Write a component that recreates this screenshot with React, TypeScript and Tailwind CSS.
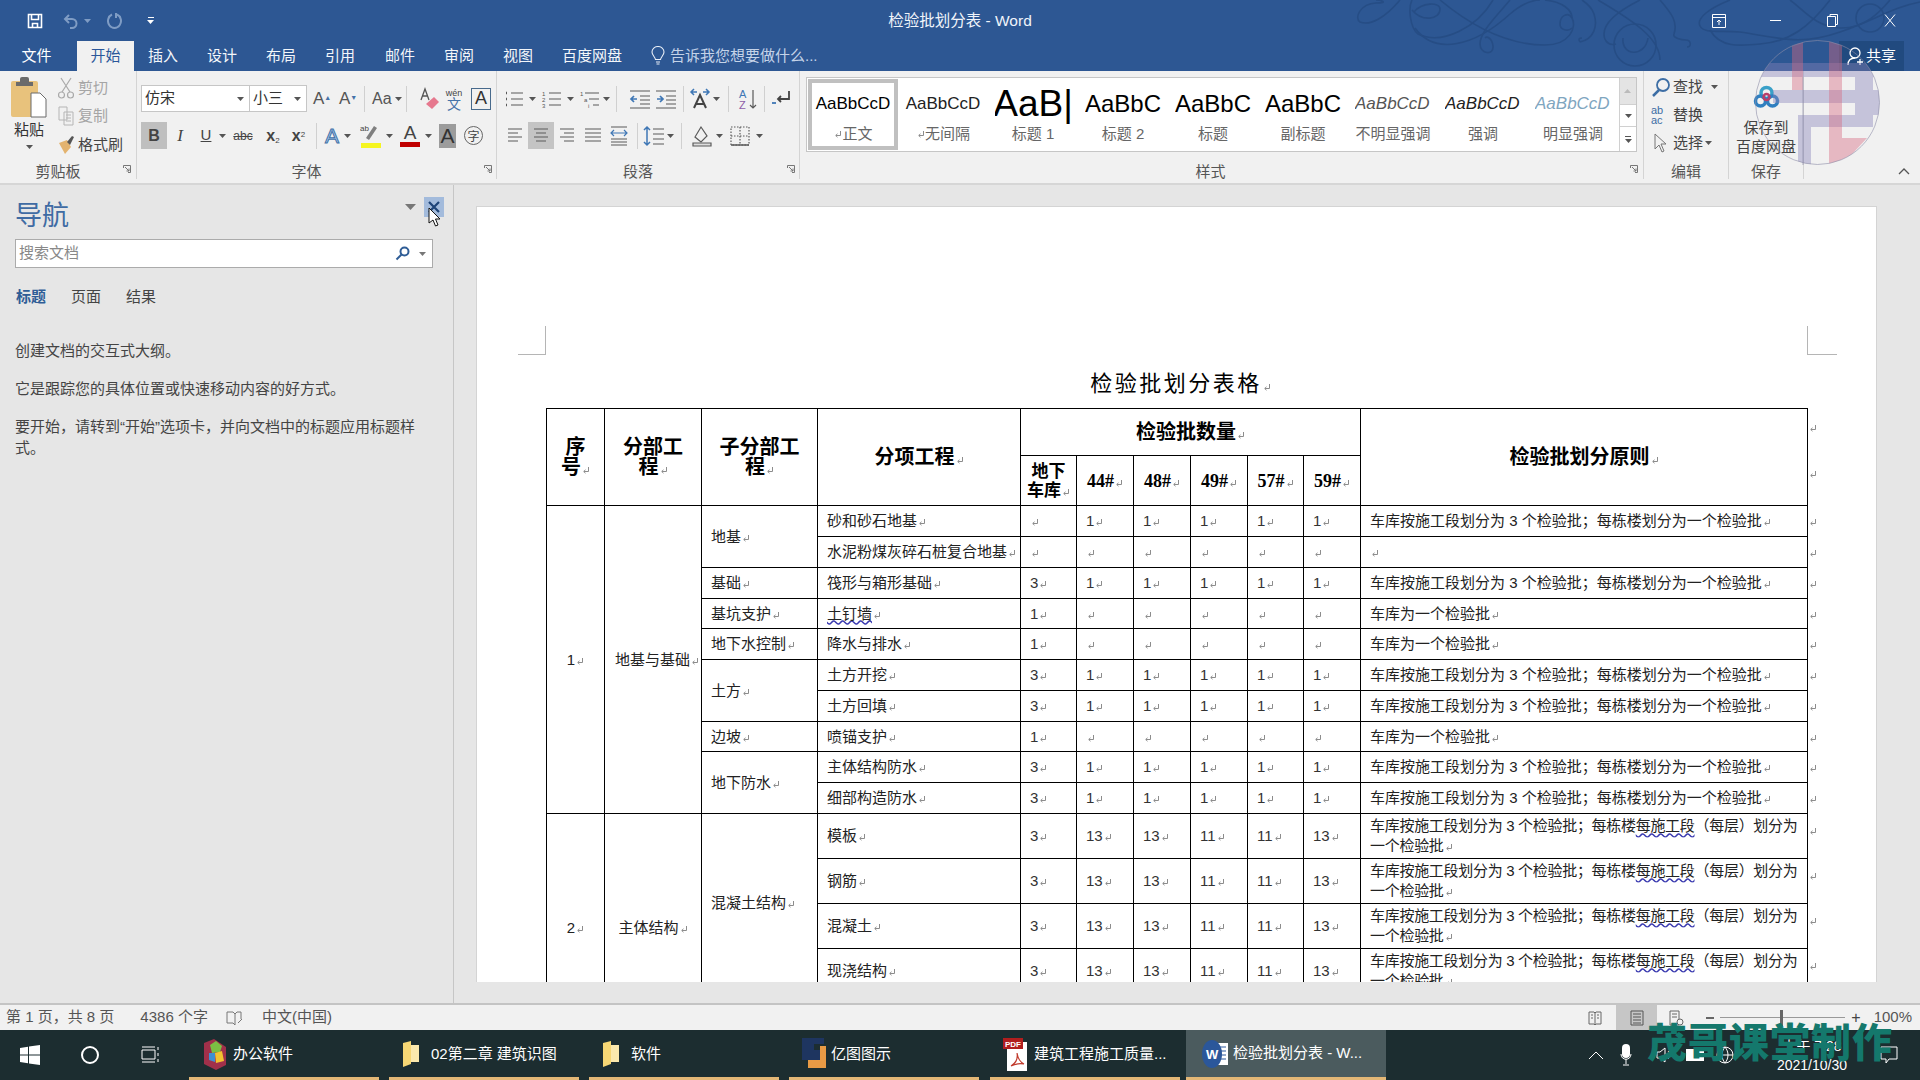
import React from 'react'

const Caret = ({ c = '#555' }: { c?: string }) => (
  <svg width="7" height="4" viewBox="0 0 7 4" className="shrink-0"><path d="M0 0h7L3.5 4z" fill={c} /></svg>
)

const Sep = () => <div className="w-px h-[26px] bg-[#d0d0d0] shrink-0" />

const Mark = () => (
  <svg width="8" height="9" viewBox="0 0 8 9" className="inline-block align-[-1px] ml-px">
    <path d="M6.5 1v4.5H2M3.5 3.8 1.7 5.5l1.8 1.7" fill="none" stroke="#8c8c8c" strokeWidth="1" />
  </svg>
)

const Ico = ({ children, w = 22 }: { children: React.ReactNode; w?: number }) => (
  <svg width={w} height="22" viewBox={`0 0 ${w} 22`} className="shrink-0" fill="none" stroke="#5a5a5a" strokeWidth="1.2">
    {children}
  </svg>
)

const Launcher = ({ className }: { className: string }) => (
  <svg className={className} width="8" height="8" viewBox="0 0 8 8" fill="none" stroke="#777"><path d="M.5 3V.5H7.500V7.500H5M2 2l4 4M6 3.500V6H3.500" /></svg>
)

const tabs = [
  ['插入', 'w-[58px]'], ['设计', 'w-[60px]'], ['布局', 'w-[58px]'], ['引用', 'w-[60px]'],
  ['邮件', 'w-[60px]'], ['审阅', 'w-[58px]'], ['视图', 'w-[60px]'], ['百度网盘', 'w-[88px]'],
]

function TitleBar() {
  return (
    <div className="relative h-[71px] bg-[#2d5793] text-white overflow-hidden">
      <svg className="absolute left-[1340px] top-0" width="580" height="71" viewBox="0 0 580 71" fill="none" stroke="#264d85" strokeWidth="1.6">
        <path d="M60 0C45 18 30 26 20 22 14 18 20 4 36 3 50 3 40 0 36 0" />
        <path d="M72 0C68 8 70 28 78 34c25 12 60-8 75-34" />
        <path d="M72 10c10 12 28 10 28-1 0-7-18-7-26 3" />
        <path d="M75 28c20 28 60 18 95-14 12-10 22-14 30-14" />
        <path d="M100 0c30 25 65 45 105 45 25 0 32-18 27-27-4-7-12-2-12 6 0 6 8 8 12 4" />
        <path d="M170 0C155 18 140 32 140 44c0 10 14 12 13 2-1-8-6-10-8-8" />
        <path d="M205 0c18 2 27 10 27 18" />
        <path d="M240 42c14-3 18-16 14-28-2-6-6-10-12-14" />
        <path d="M240 42c-2-3-1-4 2-4" />
        <path d="M258 0c34 20 62 38 62 60" />
        <path d="M300 0c-20 10-36 22-36 34 0 8 6 12 12 10" />
        <circle cx="295" cy="45" r="21" />
        <path d="M283 38c-2 18 22 20 25 0" />
        <path d="M320 0c12 14 18 22 14 34-2 4 8 6 12 6 5 0 6 7 1 7" />
        <path d="M390 0c-20 8-34 18-30 26 4 8 20 4 40 6 40 6 60 14 100 0s50-24 80-30" />
        <path d="M370 30c10 18 30 16 50 14 30-2 50-18 70-44" />
        <path d="M450 0c14 10 24 26 50 28 24 1 40-16 50-28" />
        <circle cx="530" cy="18" r="14" />
      </svg>
      <div className="relative h-[41px] flex items-center">
        <div className="flex items-center w-[200px]">
          <svg className="ml-[27px]" width="16" height="16" viewBox="0 0 16 16" fill="none" stroke="#fff" strokeWidth="1.6">
            <path d="M1.5 1.5h13v13h-13zM4.5 1.5v5h7v-5M5.5 14.500v-4h5v4" />
          </svg>
          <svg className="ml-[20px]" width="16" height="16" viewBox="0 0 16 16" fill="none" stroke="#7f9cc4" strokeWidth="2">
            <path d="M6 2 2 6l4 4M2 6h7a4.500 4.500 0 0 1 0 9H7" />
          </svg>
          <div className="ml-[5px]"><Caret c="#7f9cc4" /></div>
          <svg className="ml-[16px]" width="16" height="18" viewBox="0 0 16 18" fill="none" stroke="#7f9cc4" strokeWidth="2">
            <path d="M10 2.500a6.500 7 0 1 1-5 0M9 1v5" />
          </svg>
          <div className="ml-[24px] flex flex-col gap-[2px] items-center">
            <div className="w-[6px] h-px bg-white" />
            <Caret c="#fff" />
          </div>
        </div>
        <div className="flex-1 text-center text-[15.500px] pr-[200px] text-[#f0f4fa]">检验批划分表 - Word</div>
        <div className="absolute right-0 top-0 h-[41px] flex items-center">
          <svg className="mr-[44px]" width="14" height="14" viewBox="0 0 14 14" fill="none" stroke="#fff"><path d="M.5.5h13v13H.5zM.5 3.500h13M7 6v5M5 8l2-2 2 2" /></svg>
          <div className="w-[11px] h-px bg-white mr-[46px]" />
          <svg className="mr-[46px]" width="11" height="13" viewBox="0 0 11 13" fill="none" stroke="#fff"><path d="M.5 2.500h8v10h-8zM3 2.500v-2h7.500v10h-2" /></svg>
          <svg className="mr-[24px]" width="12" height="13" viewBox="0 0 12 13" fill="none" stroke="#fff"><path d="m1 .5 10 12M11 .5l-10 12" /></svg>
        </div>
      </div>
      <div className="relative h-[30px] flex items-stretch text-[15px]">
        <div className="w-[77px] flex items-center justify-center pr-[4px]">文件</div>
        <div className="w-[57px] flex items-center justify-center bg-[#f1f1f1] text-[#2b579a]">开始</div>
        {tabs.map(([t, w]) => (
          <div key={t} className={`${w} flex items-center justify-center text-[#f3f6fa]`}>{t}</div>
        ))}
        <div className="flex items-center ml-[15px] gap-[5px] text-[#c4d3e8]">
          <svg width="14" height="20" viewBox="0 0 14 20" fill="none" stroke="#e8eef7" strokeWidth="1.1"><path d="M4.500 13.500C4 10.500 1 9.500 1 6a6 5.500 0 0 1 12 0c0 3.500-3 4.500-3.500 7.500zM5 16h4M5.500 18h3" /></svg>
          告诉我您想要做什么...
        </div>
        <div className="absolute right-[16px] top-0 bottom-0 w-[65px] bg-[#214a7f] flex items-center justify-center gap-[1px] text-[15px]">
          <svg width="18" height="20" viewBox="0 0 18 20" fill="none" stroke="#fff" strokeWidth="1.3"><circle cx="8" cy="7" r="5" /><path d="M1 19c0-5 3-7 7-7M13 13v6M10 16h6" /></svg>
          共享
        </div>
      </div>
    </div>
  )
}

function GroupLabel({ t }: { t: string }) {
  return (
    <div className="h-[22px] flex items-center justify-center text-[15px] text-[#555]">{t}</div>
  )
}

function Clipboard() {
  return (
    <div className="w-[137px] border-r border-[#d4d4d4] mb-[4px] flex flex-col">
      <div className="h-[90px] shrink-0 flex">
        <div className="w-[58px] flex flex-col items-center pt-[6px]">
          <svg width="36" height="42" viewBox="0 0 36 42">
            <rect x="0" y="4" width="27" height="36" rx="2" fill="#e8c27c" />
            <rect x="9" y="0" width="9" height="8" rx="2" fill="#6b6b6b" />
            <rect x="5" y="5" width="17" height="4" fill="#6b6b6b" />
            <path d="M20 16h9l6 6v18H20z" fill="#fff" stroke="#6b6b6b" />
          </svg>
          <div className="text-[15px] text-[#333] leading-[18px] mt-[2px]">粘贴</div>
          <div className="mt-[6px]"><Caret /></div>
        </div>
        <div className="flex flex-col pt-[3px] text-[15px] text-[#a5a5a5]">
          <div className="h-[28px] flex items-center gap-[4px]">
            <svg width="16" height="22" viewBox="0 0 16 22" fill="none" stroke="#aaa" strokeWidth="1.2"><path d="m3 1 9 14M13 1 4 15" /><circle cx="3.500" cy="18" r="3" /><circle cx="12.500" cy="18" r="3" /></svg>
            剪切
          </div>
          <div className="h-[28px] flex items-center gap-[4px]">
            <svg width="16" height="20" viewBox="0 0 16 20" fill="none" stroke="#b5b5b5"><path d="M1 1h8v13H1zM6 6h9v13H6zM8 9h5M8 12h5M8 15h5" /></svg>
            复制
          </div>
          <div className="h-[30px] flex items-center gap-[4px] text-[#444]">
            <svg width="16" height="20" viewBox="0 0 16 20"><path d="M1 8 9 5l4 7-6 7z" fill="#e3b36f" /><path d="m9 7 5-6 2 1-4 8z" fill="#555" /></svg>
            格式刷
          </div>
        </div>
      </div>
      <div className="pr-[20px]"><GroupLabel t="剪贴板" /></div>
    </div>
  )
}

function FontGroup() {
  return (
    <div className="w-[360px] border-r border-[#d4d4d4] mb-[4px] flex flex-col">
      <div className="h-[90px] shrink-0 pl-[4px] pt-[14px] flex flex-col gap-[10px]">
        <div className="h-[27px] flex items-center text-[#555]">
          <div className="w-[109px] h-[27px] bg-white border border-[#c6c6c6] flex items-center justify-between px-[3px] pr-[5px] text-[15px] text-[#333]">仿宋<Caret /></div>
          <div className="w-[57px] h-[27px] bg-white border border-l-0 border-[#c6c6c6] flex items-center justify-between px-[3px] pr-[5px] text-[15px] text-[#333]">小三<Caret /></div>
          <span className="ml-[6px] w-[26px] text-[17px] font-['Liberation_Sans']">A<sup className="text-[7px] text-[#4472a8]">▲</sup></span>
          <span className="w-[25px] text-[17px] font-['Liberation_Sans']">A<sup className="text-[7px] text-[#4472a8]">▼</sup></span>
          <div className="mr-[7px]"><Sep /></div>
          <span className="text-[16px] font-['Liberation_Sans'] flex items-center gap-[3px] w-[34px]">Aa<Caret /></span>
          <div className="mr-[11px]"><Sep /></div>
          <svg width="22" height="24" viewBox="0 0 22 24">
            <path d="M3 13 7 2l4 11M4.500 9h5" fill="none" stroke="#555" strokeWidth="1.3" />
            <path d="m8 17 8-7 5 5-7 7z" fill="#e6788e" />
          </svg>
          <div className="flex flex-col items-center leading-[11px] w-[28px]">
            <span className="text-[9px] text-[#444] font-['Liberation_Sans']">wén</span>
            <span className="text-[14px] text-[#4472a8]">文</span>
          </div>
          <div className="ml-[3px] w-[20px] h-[22px] border border-[#486a8c] flex items-center justify-center text-[18px] text-[#333] font-['Liberation_Sans']">A</div>
        </div>
        <div className="h-[27px] flex items-center text-[#444] font-['Liberation_Sans']">
          <div className="w-[26px] h-[27px] bg-[#bfbfbf] flex items-center justify-center text-[16px] font-bold">B</div>
          <div className="w-[26px] text-center text-[17px] italic font-['Liberation_Serif']">I</div>
          <div className="w-[26px] text-center text-[15px] underline">U</div>
          <Caret />
          <div className="w-[34px] text-center text-[12px] line-through">abc</div>
          <div className="w-[26px] text-center text-[16px] font-bold">x<sub className="text-[8px] font-normal">2</sub></div>
          <div className="w-[25px] text-center text-[16px] font-bold">x<sup className="text-[8px] font-normal">2</sup></div>
          <div className="ml-[5px] mr-[3px]"><Sep /></div>
          <div className="w-[24px] text-center text-[21px] text-[#a9cdee] [-webkit-text-stroke:1px_#4472a8]">A</div>
          <Caret />
          <div className="w-[30px] ml-[5px] flex flex-col items-center">
            <svg width="22" height="20" viewBox="0 0 22 20"><path d="m6 15 8-12 3 2-8 12z" fill="#808080" /><text x="0" y="8" fontSize="8" fill="#444">ab</text></svg>
            <div className="w-[20px] h-[5px] bg-[#f5f520]" />
          </div>
          <Caret />
          <div className="w-[30px] ml-[2px] flex flex-col items-center leading-[18px]">
            <span className="text-[19px]">A</span>
            <div className="w-[20px] h-[5px] bg-[#c00000]" />
          </div>
          <Caret />
          <div className="ml-[7px] w-[17px] h-[24px] bg-[#9c9c9c] flex items-center justify-center text-[21px] text-[#333]">A</div>
          <div className="ml-[8px] w-[19px] h-[19px] rounded-full border border-[#666] flex items-center justify-center text-[12px] font-['Noto_Sans_CJK_SC']">字</div>
        </div>
      </div>
      <div className="pr-[20px]"><GroupLabel t="字体" /></div>
    </div>
  )
}

function ParaGroup() {
  return (
    <div className="w-[303px] border-r border-[#d4d4d4] mb-[4px] flex flex-col">
      <div className="h-[90px] shrink-0 pt-[14px] flex flex-col gap-[10px]">
        <div className="h-[27px] flex items-center pl-[6px]">
          <Ico><path d="M8 5h12M8 11h12M8 17h12" /><path d="M3 5h1M3 11h1M3 17h1" strokeWidth="2.500" /></Ico>
          <div className="ml-[4px] mr-[5px]"><Caret /></div>
          <Ico><path d="M8 5h12M8 11h12M8 17h12" /><text x="1" y="8" fontSize="6" stroke="none" fill="#555">1</text><text x="1" y="14" fontSize="6" stroke="none" fill="#555">2</text><text x="1" y="20" fontSize="6" stroke="none" fill="#555">3</text></Ico>
          <div className="ml-[4px] mr-[5px]"><Caret /></div>
          <Ico><path d="M6 5h14M10 11h10M14 17h6" /><text x="1" y="8" fontSize="6" stroke="none" fill="#555">1</text><text x="5" y="14" fontSize="6" stroke="none" fill="#555">a</text><text x="9" y="20" fontSize="6" stroke="none" fill="#555">i</text></Ico>
          <div className="ml-[2px] mr-[6px]"><Caret /></div>
          <Sep />
          <div className="ml-[12px]"><Ico><path d="M1 3h20M11 8h10M11 12h10M11 16h10M1 20h20" /><path d="M8 11H2m3-3-3 3 3 3" stroke="#3f77b5" strokeWidth="1.700" /></Ico></div>
          <div className="ml-[4px]"><Ico><path d="M1 3h20M11 8h10M11 12h10M11 16h10M1 20h20" /><path d="M2 11h6M5 8l3 3-3 3" stroke="#3f77b5" strokeWidth="1.700" /></Ico></div>
          <div className="ml-[6px] mr-[5px]"><Sep /></div>
          <Ico><path d="m5 20 6-13 6 13M7 16h8" stroke="#444" strokeWidth="2" /><path d="M2 4h6M5 1 2 4l3 3M20 4h-6M17 1l3 3-3 3" stroke="#3f77b5" strokeWidth="1.500" /></Ico>
          <div className="ml-[2px] mr-[8px]"><Caret /></div>
          <Sep />
          <div className="ml-[8px] mr-[5px]"><Ico><text x="2" y="10" fontSize="11" stroke="none" fill="#3f77b5">A</text><text x="2" y="21" fontSize="11" stroke="none" fill="#8e5ea8">Z</text><path d="M16 2v18M13 17l3 3 3-3" /></Ico></div>
          <Sep />
          <div className="ml-[5px]"><Ico><path d="M19 3v8H8M11 8l-3 3 3 3" strokeWidth="1.800" stroke="#444" /><path d="M2 15h4" stroke="#3f77b5" strokeWidth="1.800" /></Ico></div>
        </div>
        <div className="h-[27px] flex items-center pl-[5px]">
          <div className="w-[26px] flex justify-center"><Ico w={18}><path d="M2 4h14M2 8h10M2 12h14M2 16h10" /></Ico></div>
          <div className="w-[26px] h-[27px] bg-[#c4c4c4] flex items-center justify-center"><Ico w={18}><path d="M2 4h14M4 8h10M2 12h14M4 16h10" /></Ico></div>
          <div className="w-[26px] flex justify-center"><Ico w={18}><path d="M2 4h14M6 8h10M2 12h14M6 16h10" /></Ico></div>
          <div className="w-[26px] flex justify-center"><Ico w={18}><path d="M1 4h16M1 8h16M1 12h16M1 16h16" /></Ico></div>
          <div className="w-[26px] flex justify-center"><Ico w={18}><path d="M1 2h16M1 14h16M1 17h16M1 20h16" /><path d="M1 8h16M4 5 1 8l3 3M14 5l3 3-3 3" stroke="#3f77b5" /></Ico></div>
          <div className="mx-[5px]"><Sep /></div>
          <Ico><path d="M10 4h11M10 9h11M10 14h11M10 19h11" /><path d="M4 2v18M1 5l3-3 3 3M1 17l3 3 3-3" stroke="#3f77b5" strokeWidth="1.500" /></Ico>
          <div className="ml-[2px] mr-[7px]"><Caret /></div>
          <Sep />
          <div className="ml-[9px]"><Ico><path d="M10 2 4 12l6 5 6-6z" /><path d="M2 18h18v3H2z" fill="#ddd" /></Ico></div>
          <div className="ml-[3px] mr-[6px]"><Caret /></div>
          <Ico><path d="M2 2h18v18H2z" strokeDasharray="1.500 1.500" /><path d="M11 2v18M2 11h18" strokeDasharray="1.500 1.500" /><path d="M2 20h18" strokeWidth="1.500" /></Ico>
          <div className="ml-[5px]"><Caret /></div>
        </div>
      </div>
      <div className="pr-[20px]"><GroupLabel t="段落" /></div>
    </div>
  )
}

const gallery = [
  { p: 'AaBbCcD', l: '正文', c: 'text-[17px] text-black', m: true },
  { p: 'AaBbCcD', l: '无间隔', c: 'text-[17px] text-[#222]', m: true },
  { p: 'AaB|', l: '标题 1', c: 'text-[37px] text-black' },
  { p: 'AaBbC', l: '标题 2', c: 'text-[24px] text-black' },
  { p: 'AaBbC', l: '标题', c: 'text-[24px] text-black' },
  { p: 'AaBbC', l: '副标题', c: 'text-[24px] text-black' },
  { p: 'AaBbCcD', l: '不明显强调', c: 'text-[17px] italic text-[#555] justify-start' },
  { p: 'AaBbCcD', l: '强调', c: 'text-[17px] italic text-[#222] justify-start' },
  { p: 'AaBbCcD', l: '明显强调', c: 'text-[17px] italic text-[#7fa6bf] justify-start' },
]

function StylesGroup() {
  return (
    <div className="w-[844px] border-r border-[#d4d4d4] mb-[4px] flex flex-col">
      <div className="h-[90px] shrink-0 pl-[6px] pt-[6px]">
        <div className="w-[831px] h-[75px] bg-white border border-[#c6c6c6] flex">
          <div className="flex-1 flex pl-[1px] pt-[1px]">
            {gallery.map((g, i) => (
              <div key={i} className={`w-[90px] h-[71px] shrink-0 flex flex-col items-center overflow-hidden ${i === 0 ? 'border-[4px] border-[#c0c0c0]' : 'pt-[4px]'}`}>
                <div className={`h-[42px] w-[76px] overflow-hidden whitespace-nowrap flex items-center justify-center font-['Liberation_Sans'] ${g.c}`}>{g.p}</div>
                <div className="text-[15px] leading-[18px] text-[#666] flex items-center whitespace-nowrap">
                  {g.m && <Mark />}
                  {g.l}
                </div>
              </div>
            ))}
          </div>
          <div className="w-[17px] border-l border-[#d0d0d0] flex flex-col text-[#888]">
            <div className="h-[26px] bg-[#e4e4e4] flex items-center justify-center rotate-180"><Caret c="#bbb" /></div>
            <div className="h-[23px] border-y border-[#d0d0d0] flex items-center justify-center"><Caret /></div>
            <div className="h-[24px] flex flex-col items-center justify-center gap-[2px]"><div className="w-[6px] h-px bg-[#555]" /><Caret /></div>
          </div>
        </div>
      </div>
      <div className="pr-[22px]"><GroupLabel t="样式" /></div>
    </div>
  )
}

function EditGroup() {
  return (
    <div className="w-[85px] border-r border-[#d4d4d4] mb-[4px] flex flex-col">
      <div className="h-[90px] shrink-0 pl-[7px] pt-[2px] text-[15px] text-[#444]">
        <div className="h-[28px] flex items-center gap-[2px]">
          <svg width="20" height="20" viewBox="0 0 20 20" fill="none" stroke="#3d6ea5" strokeWidth="1.800"><circle cx="12" cy="8" r="6" /><path d="m8 13-6 6" strokeWidth="2.500" /></svg>
          查找<span className="ml-[6px]"><Caret /></span>
        </div>
        <div className="h-[28px] flex items-center gap-[2px]">
          <span className="w-[20px] text-[11px] leading-[10px] text-[#3d6ea5] font-['Liberation_Sans']">ab<br />ac</span>
          替换
        </div>
        <div className="h-[28px] flex items-center gap-[2px]">
          <svg width="20" height="22" viewBox="0 0 20 22" fill="none" stroke="#777"><path d="M4 2v15l4-4 3 7 2-1-3-7h5z" /></svg>
          选择<Caret />
        </div>
      </div>
      <GroupLabel t="编辑" />
    </div>
  )
}

function SaveGroup() {
  return (
    <div className="w-[75px] border-r border-[#d4d4d4] mb-[4px] flex flex-col">
      <div className="h-[90px] shrink-0 flex flex-col items-center pt-[14px] text-[15px] leading-[19px] text-[#444]">
        <svg width="27" height="24" viewBox="0 0 27 24" fill="none" strokeWidth="3.500">
          <circle cx="13.500" cy="8" r="5.500" stroke="#3aa0c8" />
          <circle cx="7.500" cy="16" r="5" stroke="#2f7fc0" />
          <circle cx="19.500" cy="16" r="5" stroke="#2f7fc0" />
          <circle cx="13.500" cy="12" r="3" stroke="#b8406a" strokeWidth="2.500" />
        </svg>
        <div className="mt-[9px]">保存到</div>
        <div className="whitespace-nowrap">百度网盘</div>
      </div>
      <GroupLabel t="保存" />
    </div>
  )
}

function Ribbon() {
  return (
    <div className="relative h-[114px] bg-[#f1f1f1] border-b-2 border-[#d6d6d6] flex">
      <Clipboard />
      <FontGroup />
      <ParaGroup />
      <StylesGroup />
      <EditGroup />
      <SaveGroup />
      <Launcher className="absolute left-[123px] bottom-[10px]" />
      <Launcher className="absolute left-[484px] bottom-[10px]" />
      <Launcher className="absolute left-[787px] bottom-[10px]" />
      <Launcher className="absolute left-[1630px] bottom-[10px]" />
      <svg className="absolute right-[10px] bottom-[8px]" width="12" height="8" viewBox="0 0 12 8" fill="none" stroke="#555" strokeWidth="1.300"><path d="m1 7 5-5 5 5" /></svg>
    </div>
  )
}

function NavPane() {
  return (
    <div className="w-[454px] shrink-0 border-r border-[#c6c6c6] pl-[15px] pr-[20px] relative text-[#444]">
      <div className="h-[54px] flex items-center justify-between pt-[9px]">
        <span className="text-[27px] text-[#3f6ba3]">导航</span>
        <div className="flex items-center gap-[8px] mb-[20px] mr-[-11px]">
          <svg width="11" height="6" viewBox="0 0 11 6"><path d="M0 0h11L5.500 6z" fill="#777" /></svg>
          <div className="w-[20px] h-[20px] bg-[#a3bbdc] flex items-center justify-center">
            <svg width="12" height="12" viewBox="0 0 12 12" stroke="#1e4478" strokeWidth="2.200"><path d="m1 1 10 10M11 1 1 11" /></svg>
          </div>
        </div>
      </div>
      <svg className="absolute left-[428px] top-[22px]" width="13" height="20" viewBox="0 0 13 20"><path d="M1 1v15l4-3 2.500 6 2.500-1-2.500-6H12z" fill="#fff" stroke="#111" /></svg>
      <div className="h-[29px] bg-white border border-[#ababab] flex items-center pl-[3px] pr-[6px] text-[15px] text-[#888]">
        搜索文档
        <svg className="ml-auto mr-[9px]" width="15" height="15" viewBox="0 0 15 15" fill="none" stroke="#2f5d96" strokeWidth="2"><circle cx="9.500" cy="5.500" r="4" /><path d="m6.500 8.500-5 5" /></svg>
        <Caret c="#777" />
      </div>
      <div className="flex mt-[18px] text-[15px] leading-[22px] gap-[25px] pl-px">
        <span className="font-bold text-[#2f5d96]">标题</span>
        <span>页面</span>
        <span>结果</span>
      </div>
      <div className="mt-[32px] text-[15px] leading-[21px] flex flex-col gap-[17px]">
        <p>创建文档的交互式大纲。</p>
        <p>它是跟踪您的具体位置或快速移动内容的好方式。</p>
        <p>要开始，请转到“开始”选项卡，并向文档中的标题应用标题样<br />式。</p>
      </div>
    </div>
  )
}

const cols = ['w-[58px]', 'w-[97px]', 'w-[116px]', 'w-[203px]', 'w-[56px]', 'w-[57px]', 'w-[57px]', 'w-[57px]', 'w-[56px]', 'w-[57px]', 'w-[447px]', 'w-[24px]']

const P1 = '车库按施工段划分为 3 个检验批；每栋楼划分为一个检验批'
const P2 = '车库为一个检验批'

type Row = { item: React.ReactNode; n: string[]; p: string; h: string; sub?: [string, number] }
const E = ['', '', '', '', '', '']
const F = ['3', '1', '1', '1', '1', '1']
const S = ['1', '', '', '', '', '']

const rows1: Row[] = [
  { item: '砂和砂石地基', n: ['', '1', '1', '1', '1', '1'], p: P1, h: 'h-[31px]', sub: ['地基', 2] },
  { item: '水泥粉煤灰碎石桩复合地基', n: E, p: '', h: 'h-[31px]' },
  { item: '筏形与箱形基础', n: F, p: P1, h: 'h-[31px]', sub: ['基础', 1] },
  { item: <span className="underline decoration-wavy decoration-[#3a3ab0]">土钉墙</span>, n: S, p: P2, h: 'h-[30px]', sub: ['基坑支护', 1] },
  { item: '降水与排水', n: S, p: P2, h: 'h-[31px]', sub: ['地下水控制', 1] },
  { item: '土方开挖', n: F, p: P1, h: 'h-[31px]', sub: ['土方', 2] },
  { item: '土方回填', n: F, p: P1, h: 'h-[31px]' },
  { item: '喷锚支护', n: S, p: P2, h: 'h-[30px]', sub: ['边坡', 1] },
  { item: '主体结构防水', n: F, p: P1, h: 'h-[31px]', sub: ['地下防水', 2] },
  { item: '细部构造防水', n: F, p: P1, h: 'h-[31px]' },
]

const rows2 = ['模板', '钢筋', '混凝土', '现浇结构']
const td = 'border border-black px-[9px] align-middle'

function Numbers({ n }: { n: string[] }) {
  return (
    <>
      {n.map((v, i) => (
        <td key={i} className={`${td} text-[#333]`}>{v}<Mark /></td>
      ))}
    </>
  )
}

function DocTable() {
  return (
    <table className="table-fixed border-collapse ml-[69px] w-[1285px] text-[15px] leading-[20px] text-[#222] font-['Liberation_Sans','Noto_Sans_CJK_SC',sans-serif]">
      <colgroup>
        {cols.map((c, i) => <col key={i} className={c} />)}
      </colgroup>
      <tbody>
        <tr className="h-[47px] text-[20px] font-bold text-black">
          <td rowSpan={2} className={`${td} text-center !px-[12px]`}>序号<Mark /></td>
          <td rowSpan={2} className={`${td} text-center !px-[8px]`}>分部工<br />程<Mark /></td>
          <td rowSpan={2} className={`${td} text-center !px-[8px]`}>子分部工<br />程<Mark /></td>
          <td rowSpan={2} className={`${td} text-center`}>分项工程<Mark /></td>
          <td colSpan={6} className={`${td} text-center`}>检验批数量<Mark /></td>
          <td rowSpan={2} className={`${td} text-center`}>检验批划分原则<Mark /></td>
          <td className="align-top pt-[6px]"><Mark /></td>
        </tr>
        <tr className="h-[50px] text-[18px] font-bold text-black">
          <td className={`${td} text-center !px-0 !leading-[19px] !text-[17px] whitespace-nowrap`}>地下<br />车库<Mark /></td>
          {['44#', '48#', '49#', '57#', '59#'].map(t => (
            <td key={t} className={`${td} !px-0 text-center font-['Liberation_Serif']`}>{t}<Mark /></td>
          ))}
          <td className="align-top pt-[6px]"><Mark /></td>
        </tr>
        {rows1.map((r, i) => (
          <tr key={i} className={r.h}>
            {i === 0 && <td rowSpan={10} className={`${td} text-center`}>1<Mark /></td>}
            {i === 0 && <td rowSpan={10} className={`${td} text-center !px-[10px] whitespace-nowrap`}>地基与基础<Mark /></td>}
            {r.sub && <td rowSpan={r.sub[1]} className={td}>{r.sub[0]}<Mark /></td>}
            <td className={`${td} whitespace-nowrap`}>{r.item}<Mark /></td>
            <Numbers n={r.n} />
            <td className={td}>{r.p}<Mark /></td>
            <td><Mark /></td>
          </tr>
        ))}
        {rows2.map((t, i) => (
          <tr key={t} className="h-[45px]">
            {i === 0 && <td rowSpan={4} className={`${td} text-center !align-top !pt-[104px]`}>2<Mark /></td>}
            {i === 0 && <td rowSpan={4} className={`${td} text-center !px-[10px] whitespace-nowrap !align-top !pt-[104px]`}>主体结构<Mark /></td>}
            {i === 0 && <td rowSpan={4} className={`${td} whitespace-nowrap !align-top !pt-[79px]`}>混凝土结构<Mark /></td>}
            <td className={td}>{t}<Mark /></td>
            <Numbers n={['3', '13', '13', '11', '11', '13']} />
            <td className={`${td} whitespace-nowrap tracking-[-0.3px]`}>
              车库按施工段划分为 3 个检验批；每栋楼<span className="underline decoration-wavy decoration-[#3a3ab0]">每施工段</span>（每层）划分为<br />一个检验批<Mark />
            </td>
            <td className="align-top pt-[6px]"><Mark /></td>
          </tr>
        ))}
      </tbody>
    </table>
  )
}

function Document() {
  return (
    <div className="flex-1 min-w-0 h-[818px] flex flex-col pl-[22px]">
      <div className="relative w-[1401px] mt-[21px] h-[776px] bg-white border border-b-0 border-[#d4d4d4] overflow-hidden">
        <div className="absolute left-[41px] top-[119px] w-[28px] h-[29px] border-r border-b border-[#b5b5b5]" />
        <div className="absolute left-[1330px] top-[119px] w-[30px] h-[29px] border-l border-b border-[#b5b5b5]" />
        <div className="pt-[162px] pl-[8px] h-[201px] text-center text-[22px] leading-[30px] tracking-[2.500px] text-black">
          检验批划分表格<Mark />
        </div>
        <DocTable />
      </div>
    </div>
  )
}

function StatusBar() {
  return (
    <div className="h-[27px] bg-[#f1f1f1] border-t-2 border-[#c4c4c4] flex items-center text-[15px] text-[#555] relative">
      <span className="ml-[6px]">第 1 页，共 8 页</span>
      <span className="ml-[26px]">4386 个字</span>
      <svg className="ml-[18px]" width="18" height="16" viewBox="0 0 18 16" fill="none" stroke="#777"><path d="M1 2h6l2 2v11l-2-2H1zM9 4l2-2h4v7M12 13l4-4" /></svg>
      <span className="ml-[18px]">中文(中国)</span>
      <div className="ml-auto flex items-center h-[25px]">
        <svg className="mr-[14px]" width="14" height="16" viewBox="0 0 14 16" fill="none" stroke="#666"><path d="M1 2h5l1 1 1-1h5v12H8l-1 1-1-1H1zM7 3v11M3 5h2M3 8h2M9 5h2M9 8h2" /></svg>
        <div className="w-[41px] h-[25px] bg-[#c6c6c6] flex items-center justify-center">
          <svg width="14" height="16" viewBox="0 0 14 16" fill="none" stroke="#555"><path d="M1 1h12v14H1zM3 4h8M3 7h8M3 10h8M3 13h8" /></svg>
        </div>
        <svg className="ml-[12px] mr-[22px]" width="15" height="16" viewBox="0 0 15 16" fill="none" stroke="#666"><path d="M1 1h9v14H1zM3 4h5M3 7h5" /><circle cx="11" cy="12" r="3" fill="#f1f1f1" /></svg>
        <span className="w-[8px] h-[2px] bg-[#666]" />
        <div className="w-[125px] mx-[6px] h-px bg-[#999] flex items-center pl-[60px]"><div className="w-[3px] h-[16px] bg-[#666]" /></div>
        <span className="text-[16px] leading-none text-[#444]">+</span>
        <span className="ml-[13px] mr-[8px] text-[15px]">100%</span>
      </div>
    </div>
  )
}

const Folder = () => (
  <svg width="18" height="28" viewBox="0 0 18 28" className="mr-[6px]"><path d="M1 3 9 1v23l-8 3z" fill="#f7d774" /><path d="M9 5h8v17H9z" fill="#fbe9ad" /></svg>
)

function TaskItem({ icon, t, wide, active }: { icon: React.ReactNode; t: string; wide?: boolean; active?: boolean }) {
  return (
    <div className={`h-[50px] flex items-center shrink-0 border-b-[3px] border-[#e3b776] text-[15px] text-white gap-[5px] ${wide ? 'w-[200px]' : 'w-[190px]'} ${active ? 'bg-[#4b5b5e] pl-[16px]' : 'pl-[13px] pt-px'}`}>
      {icon}
      <span className="whitespace-nowrap">{t}</span>
    </div>
  )
}

function Taskbar() {
  return (
    <div className="relative h-[50px] bg-[#1c2d30] flex items-center">
      <svg className="ml-[20px] shrink-0" width="20" height="20" viewBox="0 0 20 20" fill="#fff"><path d="M0 3l8-1.200V9.500H0zM9 1.600 20 0v9.500H9zM0 10.500h8v7.700L0 17zM9 10.500h11V20L9 18.400z" /></svg>
      <div className="ml-[41px] w-[18px] h-[18px] rounded-full border-2 border-white shrink-0" />
      <svg className="ml-[42px] shrink-0" width="20" height="20" viewBox="0 0 20 20" fill="none" stroke="#fff"><path d="M1 5h13v9H1zM1 2h13M1 17h13M17 2v3M17 8v3M17 14v3" /></svg>
      <div className="ml-[28px] flex gap-[10px]">
        <TaskItem t="办公软件" icon={
          <svg width="26" height="34" viewBox="0 0 26 34"><path d="M2 6 12 2l12 8v18l-10 5-12-6z" fill="#a0304a" /><path d="m8 8 6-4 6 5-2 6-8 1z" fill="#7bc043" /><path d="m13 16 7-2 2 10-8 2z" fill="#f2c230" /><path d="m7 16 6 0 0 9-6-2z" fill="#3f8fd2" /></svg>
        } />
        <TaskItem t="02第二章 建筑识图" icon={<Folder />} />
        <TaskItem t="软件" icon={<Folder />} />
        <TaskItem t="亿图图示" icon={
          <svg width="24" height="32" viewBox="0 0 24 32"><path d="M0 0h22v6H0zM0 6h12v6H0zM0 12h22v10H0z" fill="#1e3560" /><path d="M6 22h18V8h-6v14H6v8h18v-8z" fill="#e89a45" /></svg>
        } />
        <div className="ml-[1px]">
          <TaskItem t="建筑工程施工质量..." icon={
            <svg width="26" height="36" viewBox="0 0 26 36"><path d="M4 6h20v29H4z" fill="#fff" /><rect x="0" y="2" width="20" height="11" fill="#b01e1e" /><text x="2" y="11" fontSize="8" fontWeight="700" fill="#fff">PDF</text><path d="M8 30c5-3 7-8 6-13 1 6 3 9 7 11-5-1-9 0-13 2z" fill="none" stroke="#c0392b" strokeWidth="1.200" /></svg>
          } />
        </div>
        <div className="ml-[-4px]">
          <TaskItem active wide t="检验批划分表 - W..." icon={
            <svg width="26" height="28" viewBox="0 0 26 28"><rect x="12" y="3" width="14" height="22" fill="#fff" /><path d="M15 7h9M15 11h9M15 15h9M15 19h9" stroke="#2b579a" /><ellipse cx="10" cy="14" rx="10" ry="14" fill="#2b579a" /><text x="4" y="19" fontSize="13" fontWeight="700" fill="#fff">W</text></svg>
          } />
        </div>
      </div>
      <div className="ml-auto flex items-center text-white relative h-[50px]">
        <svg className="mr-[16px]" width="16" height="10" viewBox="0 0 16 10" fill="none" stroke="#fff"><path d="m1 9 7-7 7 7" /></svg>
        <svg className="mr-[24px]" width="12" height="22" viewBox="0 0 12 22"><rect x="2" y="0" width="8" height="14" rx="4" fill="#fff" /><path d="M1 10c0 7 10 7 10 0M6 15v5M3 21h6" fill="none" stroke="#fff" /></svg>
        <svg className="mr-[12px]" width="18" height="16" viewBox="0 0 18 16" fill="none" stroke="#fff"><path d="M1 5h3l5-4v14l-5-4H1zM12 4c2 2 2 6 0 8" /></svg>
        <div className="w-[18px] h-[12px] border border-white mr-[12px] bg-white" />
        <svg className="mr-[20px]" width="18" height="18" viewBox="0 0 18 18" fill="none" stroke="#fff"><circle cx="9" cy="9" r="8" /><path d="M1 9h16M9 1c-4 5-4 11 0 16M9 1c4 5 4 11 0 16" /></svg>
        <div className="w-px h-[12px] bg-white mr-[14px]" />
        <div className="w-[86px] flex flex-col items-center text-[14px] leading-[19px] pt-[2px] mr-[25px]">
          <span>上午 7:28</span>
          <span>2021/10/30</span>
        </div>
        <svg className="mr-[22px]" width="18" height="18" viewBox="0 0 18 18" fill="none" stroke="#fff"><path d="M1 1h16v12H9l-3 4v-4H1z" /></svg>
      </div>
      <div className="absolute right-[27px] top-[-9px] text-[40px] leading-[44px] font-black tracking-[1px] text-[#14786c] whitespace-nowrap pointer-events-none">茂哥课堂制作</div>
    </div>
  )
}

export default function App() {
  return (
    <div className="relative w-[1920px] h-[1080px] overflow-hidden bg-[#e6e6e6] font-['Liberation_Sans','Noto_Sans_CJK_SC',sans-serif]">
      <TitleBar />
      <Ribbon />
      <div className="h-[818px] flex">
        <NavPane />
        <Document />
      </div>
      <StatusBar />
      <Taskbar />
      {/* 水印圆标 */}
      <svg className="absolute left-[1755px] top-[40px] pointer-events-none" width="125" height="125" viewBox="0 0 125 125">
        <defs><clipPath id="wm"><circle cx="62.500" cy="62.500" r="62" /></clipPath></defs>
        <g clipPath="url(#wm)" fill="#8883bb" fillOpacity="0.42">
          <rect x="0" y="23" width="125" height="14" />
          <rect x="18" y="50" width="107" height="13" />
          <rect x="43" y="75" width="75" height="12" />
          <rect x="100" y="37" width="18" height="13" />
          <rect x="100" y="63" width="25" height="12" />
          <rect x="43" y="87" width="13" height="38" />
          <g fill="#d66a80" fillOpacity="0.42">
            <rect x="37" y="0" width="11" height="50" />
            <rect x="74" y="0" width="13" height="125" />
            <path d="M87 98h25l-25 27z" />
          </g>
        </g>
        <circle cx="62.500" cy="62.500" r="62" fill="none" stroke="#8d8da8" strokeOpacity="0.6" />
        <path d="M48 37v88" stroke="#8d8da8" strokeOpacity="0.7" />
      </svg>
    </div>
  )
}
